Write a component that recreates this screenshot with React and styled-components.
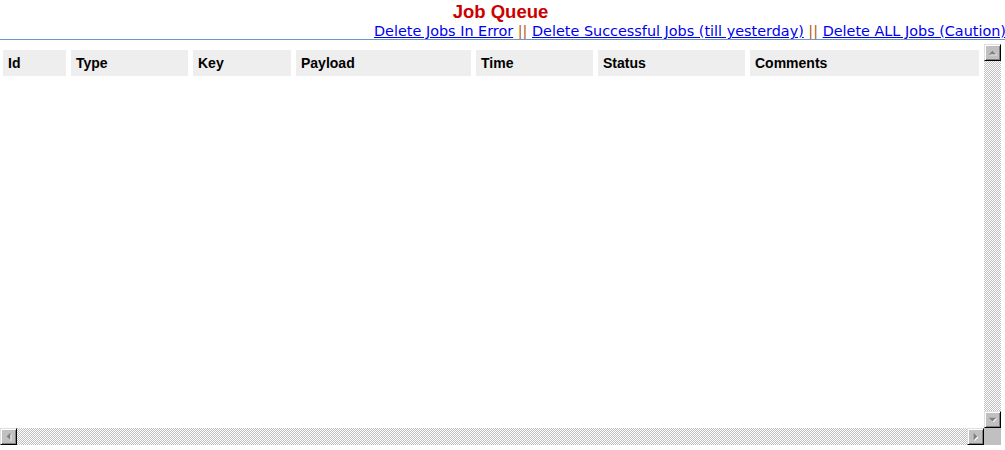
import styled, { createGlobalStyle } from "styled-components";

const GlobalStyle = createGlobalStyle`
  html, body {
    margin: 0;
    padding: 0;
    background: #ffffff;
  }
`;

const columns = [
  { name: "Id", width: 63 },
  { name: "Type", width: 117 },
  { name: "Key", width: 98 },
  { name: "Payload", width: 175 },
  { name: "Time", width: 117 },
  { name: "Status", width: 147 },
  { name: "Comments", width: 229 },
];

const links = [
  "Delete Jobs In Error",
  "Delete Successful Jobs (till yesterday)",
  "Delete ALL Jobs (Caution)",
];

function Arrow({ dir }) {
  const points = {
    up: "4,10 8,6 12,10",
    down: "4,6 8,10 12,6",
    left: "10,4 6,8 10,12",
    right: "6,4 10,8 6,12",
  }[dir];
  return (
    <svg width="15" height="15" viewBox="0 0 16 16">
      <polygon points={points} fill="#ffffff" transform="translate(1 1)" />
      <polygon points={points} fill="#808080" />
    </svg>
  );
}

function JobQueue() {
  return (
    <Page>
      <GlobalStyle />
      <Title>Job Queue</Title>
      <Actions>
        {links.map((label, i) => (
          <span key={label}>
            {i > 0 && <Separator> || </Separator>}
            <ActionLink href="#">{label}</ActionLink>
          </span>
        ))}
      </Actions>
      <Divider />
      <Frame>
        <Content>
          <HeaderRow>
            {columns.map((col) => (
              <HeaderCell key={col.name} $width={col.width}>
                {col.name}
              </HeaderCell>
            ))}
          </HeaderRow>
        </Content>
        <VTrack>
          <ScrollButton>
            <Arrow dir="up" />
          </ScrollButton>
          <ScrollButton>
            <Arrow dir="down" />
          </ScrollButton>
        </VTrack>
        <HTrack>
          <ScrollButton>
            <Arrow dir="left" />
          </ScrollButton>
          <ScrollButton>
            <Arrow dir="right" />
          </ScrollButton>
        </HTrack>
        <Corner />
      </Frame>
    </Page>
  );
}

const Page = styled.div`
  width: 1005px;
  height: 450px;
  display: flex;
  flex-direction: column;
  overflow: hidden;
`;

const Title = styled.div`
  width: 1001px;
  text-align: center;
  font-family: "Liberation Sans", Arial, sans-serif;
  font-weight: 700;
  font-size: 18.5px;
  line-height: 23px;
  color: #cc0000;
`;

const Actions = styled.div`
  text-align: right;
  font-family: "DejaVu Sans", Verdana, sans-serif;
  font-size: 14.4px;
  line-height: 16px;
  white-space: nowrap;
  margin-right: -1px;
`;

const ActionLink = styled.a`
  color: #0000ee;
  text-decoration: underline;
`;

const Separator = styled.span`
  color: #b06010;
  white-space: pre;
`;

const Divider = styled.div`
  height: 1px;
  background: #6b98cf;
  margin-bottom: 4px;
`;

const Frame = styled.div`
  width: 1001px;
  height: 401px;
  display: grid;
  grid-template-columns: 1fr 17px;
  grid-template-rows: 1fr 17px;
`;

const Content = styled.div`
  padding: 6px 3px;
  overflow: hidden;
`;

const HeaderRow = styled.div`
  display: flex;
  gap: 5px;
`;

const HeaderCell = styled.div`
  width: ${({ $width }) => $width}px;
  height: 26px;
  flex-shrink: 0;
  box-sizing: border-box;
  padding-left: 5px;
  display: flex;
  align-items: center;
  background: #eeeeee;
  font-family: "Liberation Sans", Arial, sans-serif;
  font-weight: 700;
  font-size: 14px;
  color: #000000;
`;

const checker = `
  background-color: #ffffff;
  background-image: repeating-conic-gradient(#c0c0c0 0 25%, #ffffff 0 50%);
  background-size: 2px 2px;
`;

const VTrack = styled.div`
  ${checker}
  display: flex;
  flex-direction: column;
  justify-content: space-between;
`;

const HTrack = styled.div`
  ${checker}
  display: flex;
  justify-content: space-between;
`;

const ScrollButton = styled.div`
  width: 17px;
  height: 17px;
  box-sizing: border-box;
  background: #c0c0c0;
  border-top: 1px solid #dfdfdf;
  border-left: 1px solid #dfdfdf;
  border-right: 1px solid #000000;
  border-bottom: 1px solid #000000;
  box-shadow: inset 1px 1px 0 #ffffff, inset -1px -1px 0 #808080;
  display: flex;
  align-items: center;
  justify-content: center;

  svg {
    display: block;
  }
`;

const Corner = styled.div`
  background: #c0c0c0;
`;

export default JobQueue;
